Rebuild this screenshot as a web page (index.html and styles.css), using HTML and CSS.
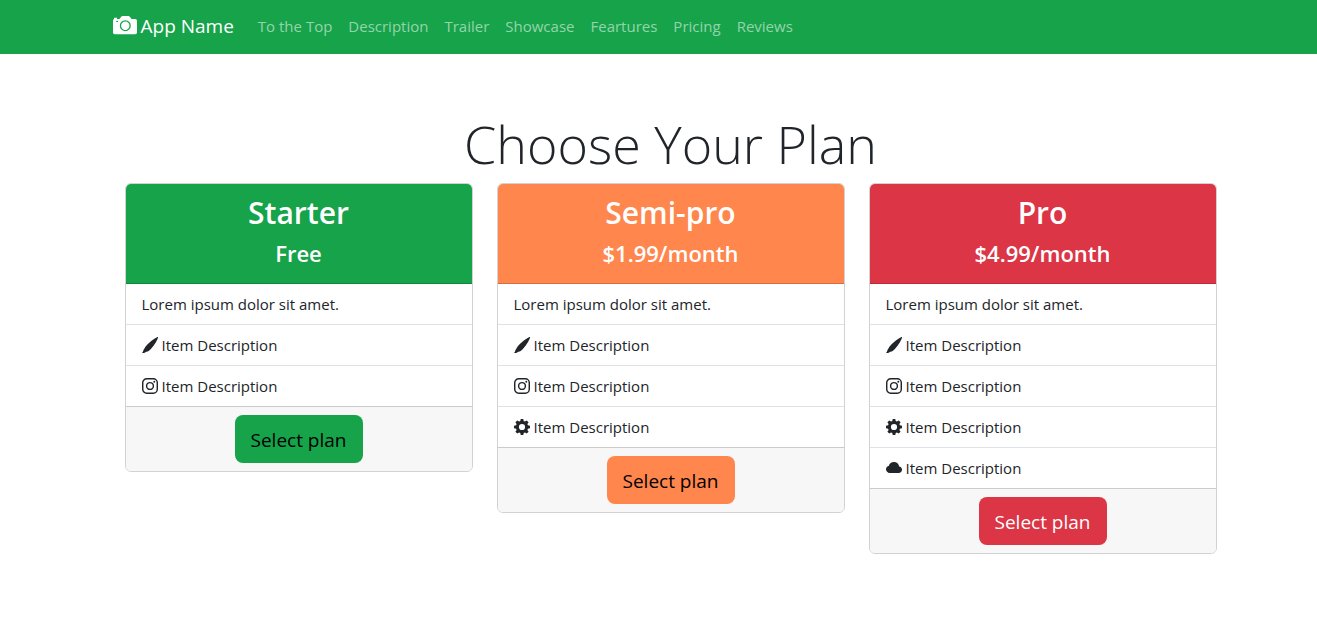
FILE: index.html
```html
<!DOCTYPE html>
<html lang="en">
<head>
<meta charset="utf-8">
<meta name="viewport" content="width=device-width, initial-scale=1">
<title>App Name</title>
<link rel="stylesheet" href="styles.css">
</head>
<body>
<svg class="sprite" aria-hidden="true">
  <symbol id="camera" viewBox="0 0 24 20">
    <path fill-rule="evenodd" d="M1.600 3H6.400L8.200 .8Q8.800 .1 9.700 .1H15.300Q16.200 .1 16.800 .8L18.600 3H22.200Q24 3 24 4.800V16.400Q24 18.200 22.200 18.200H1.800Q0 18.200 0 16.400V4.800Q0 3.500 1 3V1.800H4V3ZM3.200 4.900H5V6H3.200ZM12.300 4.200A5.500 5.500 0 1 0 12.300 15.200A5.500 5.500 0 1 0 12.300 4.200ZM12.300 5.500A4.200 4.200 0 1 1 12.300 13.900A4.200 4.200 0 1 1 12.300 5.500Z"/>
  </symbol>
  <symbol id="brush" viewBox="0 0 16 16">
    <path d="M15.900 .1C16.300 .6 15.500 2.400 14.200 4.700C12.800 7.100 10.800 9.900 8.900 12C7.400 13.600 6 14.600 4.400 14.800C3.700 14.900 3.400 15.500 2.600 15.700C1.700 16 .8 15.900 0 15.700C.9 15.200 1 14.500 1.300 13.500C1.600 12.500 2.300 11.900 2.700 11.100C3.700 9.300 5.800 7.200 8.100 5.100C10.500 3 13 1.300 14.600 .5C15.200 .1 15.600 0 15.900 .1Z"/>
  </symbol>
  <symbol id="instagram" viewBox="0 0 16 16">
    <g fill="none" stroke="currentColor" stroke-width="1.440">
      <rect x=".72" y=".72" width="14.560" height="14.560" rx="4"/>
      <circle cx="8" cy="8" r="3.400"/>
    </g>
    <circle cx="12.270" cy="3.730" r=".96"/>
  </symbol>
  <symbol id="gear" viewBox="0 0 16 16">
    <path fill-rule="evenodd" d="M6.700 0H9.300L9.700 2.100L10.900 2.600L12.700 1.400L14.600 3.300L13.400 5.100L13.900 6.300L16 6.700V9.300L13.900 9.700L13.400 10.900L14.600 12.700L12.700 14.600L10.900 13.400L9.700 13.900L9.300 16H6.700L6.300 13.900L5.100 13.400L3.300 14.600L1.400 12.700L2.600 10.900L2.100 9.700L0 9.300V6.700L2.100 6.300L2.600 5.100L1.400 3.300L3.300 1.400L5.100 2.600L6.300 2.100ZM8 4.900A3.100 3.100 0 1 0 8 11.100A3.100 3.100 0 1 0 8 4.900Z"/>
  </symbol>
  <symbol id="cloud" viewBox="0 0 16 16">
    <path d="M4.406 3.342A5.530 5.530 0 0 1 8 2c2.690 0 4.923 2 5.166 4.579C14.758 6.804 16 8.137 16 9.773C16 11.569 14.502 13 12.687 13H3.781C1.708 13 0 11.366 0 9.318c0-1.763 1.266-3.223 2.942-3.593c.143-.863.698-1.723 1.464-2.383z"/>
  </symbol>
</svg>

<header class="navbar">
  <div class="container navbar-inner">
    <a class="brand" href="#top"><svg class="brand-icon" aria-hidden="true"><use href="#camera"/></svg>App Name</a>
    <nav class="nav" aria-label="Main">
      <a class="nav-link" href="#top">To the Top</a>
      <a class="nav-link" href="#description">Description</a>
      <a class="nav-link" href="#trailer">Trailer</a>
      <a class="nav-link" href="#showcase">Showcase</a>
      <a class="nav-link" href="#features">Feartures</a>
      <a class="nav-link" href="#pricing">Pricing</a>
      <a class="nav-link" href="#reviews">Reviews</a>
    </nav>
  </div>
</header>

<main class="container pricing" id="pricing">
  <h1 class="title">Choose Your Plan</h1>
  <div class="plans">
    <section class="card starter">
      <header class="card-header">
        <h2 class="plan-name">Starter</h2>
        <p class="plan-price">Free</p>
      </header>
      <ul class="features">
        <li class="feature">Lorem ipsum dolor sit amet.</li>
        <li class="feature"><svg class="icon" aria-hidden="true"><use href="#brush"/></svg>Item Description</li>
        <li class="feature"><svg class="icon" aria-hidden="true"><use href="#instagram"/></svg>Item Description</li>
      </ul>
      <footer class="card-footer"><button class="btn" type="button">Select plan</button></footer>
    </section>
    <section class="card semi-pro">
      <header class="card-header">
        <h2 class="plan-name">Semi-pro</h2>
        <p class="plan-price">$1.99/month</p>
      </header>
      <ul class="features">
        <li class="feature">Lorem ipsum dolor sit amet.</li>
        <li class="feature"><svg class="icon" aria-hidden="true"><use href="#brush"/></svg>Item Description</li>
        <li class="feature"><svg class="icon" aria-hidden="true"><use href="#instagram"/></svg>Item Description</li>
        <li class="feature"><svg class="icon" aria-hidden="true"><use href="#gear"/></svg>Item Description</li>
      </ul>
      <footer class="card-footer"><button class="btn" type="button">Select plan</button></footer>
    </section>
    <section class="card pro">
      <header class="card-header">
        <h2 class="plan-name">Pro</h2>
        <p class="plan-price">$4.99/month</p>
      </header>
      <ul class="features">
        <li class="feature">Lorem ipsum dolor sit amet.</li>
        <li class="feature"><svg class="icon" aria-hidden="true"><use href="#brush"/></svg>Item Description</li>
        <li class="feature"><svg class="icon" aria-hidden="true"><use href="#instagram"/></svg>Item Description</li>
        <li class="feature"><svg class="icon" aria-hidden="true"><use href="#gear"/></svg>Item Description</li>
        <li class="feature"><svg class="icon" aria-hidden="true"><use href="#cloud"/></svg>Item Description</li>
      </ul>
      <footer class="card-footer"><button class="btn" type="button">Select plan</button></footer>
    </section>
  </div>
</main>
</body>
</html>
```

FILE: styles.css
```css
*, *::before, *::after { box-sizing: border-box; }

body {
  margin: 0;
  background: #fff;
  color: #212529;
  font-family: "Open Sans", "Noto Sans", sans-serif;
  font-size: 15px;
  line-height: 24px;
}

.sprite { display: none; }

.container {
  width: 100%;
  max-width: 1140px;
  margin: 0 auto;
}

.navbar {
  background: #16a34a;
  color: #fff;
}

.navbar-inner {
  display: flex;
  flex-wrap: wrap;
  align-items: center;
  padding: 6px 24px 8px;
}

.brand {
  display: flex;
  align-items: center;
  gap: 4px;
  margin-right: 16px;
  color: #fff;
  font-size: 19px;
  line-height: 30px;
  text-decoration: none;
}

.brand-icon {
  width: 24px;
  height: 20px;
  fill: currentColor;
}

.nav {
  display: flex;
  flex-wrap: wrap;
}

.nav-link {
  padding: 8px;
  color: rgba(255, 255, 255, .55);
  text-decoration: none;
}

.pricing { padding: 56px 12px 56px 36px; }

.title {
  margin: 0 0 6px;
  font-size: 52px;
  font-weight: 300;
  line-height: 67px;
  text-align: center;
}

.plans {
  display: grid;
  grid-template-columns: repeat(3, 1fr);
  align-items: start;
  gap: 24px;
}

.card {
  --accent: #16a34a;
  --on-accent: #000;
  overflow: hidden;
  border: 1px solid rgba(0, 0, 0, .175);
  border-radius: 6px;
}

.semi-pro { --accent: #ff864d; }

.pro {
  --accent: #dc3545;
  --on-accent: #fff;
}

.card-header {
  padding: 10px 16px 15px;
  border-bottom: 1px solid rgba(0, 0, 0, .175);
  background: var(--accent);
  color: #fff;
  font-weight: 600;
  text-align: center;
}

.plan-name {
  margin: 0 0 7px;
  font-size: 30px;
  font-weight: 600;
  line-height: 38px;
}

.plan-price {
  margin: 0;
  font-size: 22px;
  line-height: 29px;
}

.features {
  margin: 0;
  padding: 0;
  list-style: none;
}

.feature {
  display: flex;
  align-items: center;
  gap: 4px;
  padding: 8px 16px;
}

.feature + .feature { border-top: 1px solid #dee2e6; }

.icon {
  width: 16px;
  height: 16px;
  fill: currentColor;
}

.card-footer {
  padding: 8px 16px;
  border-top: 1px solid rgba(0, 0, 0, .175);
  background: #f7f7f7;
  text-align: center;
}

.btn {
  display: block;
  margin: 0 auto;
  padding: 10px 16px 8px;
  border: 0;
  border-radius: 8px;
  background: var(--accent);
  color: var(--on-accent);
  font-family: inherit;
  font-size: 19px;
  line-height: 30px;
  cursor: pointer;
}

@media (max-width: 767px) {
  .pricing { padding: 32px 16px; }
  .plans { grid-template-columns: 1fr; }
}
```
